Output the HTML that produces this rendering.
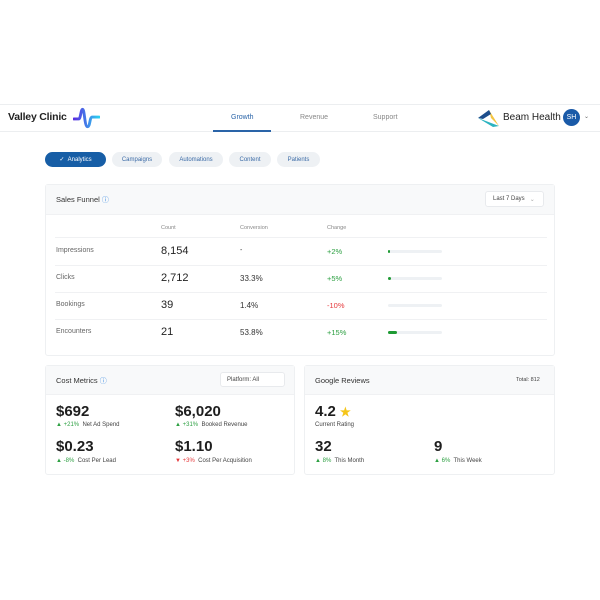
<!DOCTYPE html>
<html><head><style>
*{box-sizing:border-box;margin:0;padding:0}
body{width:600px;height:600px;background:#fff;font-family:"Liberation Sans",sans-serif;color:#222;position:relative;overflow:hidden}
.abs{position:absolute}
.hdr{top:104px;left:0;width:600px;height:28px;border-top:1px solid #eceef0;border-bottom:1px solid #eceef0}
.pill{position:absolute;top:152px;height:15px;border-radius:8px;background:#eef1f4;color:#3a6aa6;font-size:6px;display:flex;align-items:center;justify-content:center}
.card{position:absolute;border:1px solid #eef0f2;border-radius:3px;background:#fff}
.ch{background:#f8f9fa;border-bottom:1px solid #f0f1f3}
.t{position:absolute;white-space:nowrap}
.g{color:#2ea043}.r{color:#e5383b}
.lbl{font-size:7px;color:#666}
.big{font-size:11px;color:#222}
.bar{position:absolute;left:388px;width:54px;height:3px;background:#eef1f4;border-radius:2px}
.bar i{position:absolute;left:0;top:0;height:3px;background:#1e9a33;border-radius:2px}
.hl{position:absolute;left:55px;width:492px;height:1px;background:#f0f1f3}
.m{font-size:15px;font-weight:bold;color:#1e1e1e}
.s{font-size:6px;color:#444}
.box{position:absolute;border:1px solid #e8eaed;border-radius:3px;background:#fff;font-size:6px;color:#444;display:flex;align-items:center}
</style></head><body>
<div class="abs hdr"></div>
<div class="t" style="left:8px;top:111px;font-size:10.5px;font-weight:bold;color:#222;letter-spacing:-0.2px">Valley Clinic</div>
<svg class="abs" style="left:73px;top:107px" width="27" height="22" viewBox="0 0 28 22"><defs><linearGradient id="a" x1="0" x2="1"><stop offset="0" stop-color="#5a2de0"/><stop offset="1" stop-color="#2bd0f0"/></linearGradient></defs><path d="M1 12 H6 C8 12 8 2 10 2 C12 2 12 20 15 20 C18 20 17 10 20 10 H27" fill="none" stroke="url(#a)" stroke-width="3" stroke-linecap="round"/></svg>
<div class="t" style="left:231px;top:114px;font-size:7px;color:#2a64a8">Growth</div>
<div class="abs" style="left:213px;top:130px;width:58px;height:2px;background:#2a64a8"></div>
<div class="t" style="left:300px;top:114px;font-size:7px;color:#888">Revenue</div>
<div class="t" style="left:373px;top:114px;font-size:7px;color:#888">Support</div>
<svg class="abs" style="left:477px;top:108px" width="24" height="20" viewBox="0 0 24 20"><path d="M12 2 L22 18 L14 10 Z" fill="#f4c542"/><path d="M1 10 L12 2 L14 6 L6 11 Z" fill="#1d4e8c"/><path d="M1 10 L22 18 L16 19 Z" fill="#2bb3c0"/></svg>
<div class="t" style="left:503px;top:112px;font-size:10px;color:#222">Beam Health</div>
<div class="abs" style="left:563px;top:109px;width:17px;height:17px;border-radius:50%;background:#1a5aa8;color:#fff;font-size:7px;line-height:17px;text-align:center">SH</div>
<div class="t" style="left:584px;top:113px;font-size:6px;color:#666">⌄</div>

<div class="pill" style="left:45px;width:61px;background:#175ea6;color:#fff">✓&nbsp;&nbsp;Analytics</div>
<div class="pill" style="left:112px;width:50px">Campaigns</div>
<div class="pill" style="left:169px;width:54px">Automations</div>
<div class="pill" style="left:229px;width:42px">Content</div>
<div class="pill" style="left:277px;width:43px">Patients</div>

<div class="card" style="left:45px;top:184px;width:510px;height:172px">
<div class="ch" style="height:30px"></div></div>
<div class="t" style="left:56px;top:195px;font-size:7.5px;color:#333">Sales Funnel <span style="color:#3a8ae0;font-size:7px">ⓘ</span></div>
<div class="box" style="left:485px;top:191px;width:59px;height:16px;padding-left:7px">Last 7 Days&nbsp;&nbsp;&nbsp;<span style="color:#aaa">⌄</span></div>
<div class="t" style="left:161px;top:225px;font-size:5.5px;color:#888">Count</div>
<div class="t" style="left:240px;top:225px;font-size:5.5px;color:#888">Conversion</div>
<div class="t" style="left:327px;top:225px;font-size:5.5px;color:#888">Change</div>
<div class="hl" style="top:237px"></div>
<div class="hl" style="top:265px"></div>
<div class="hl" style="top:292px"></div>
<div class="hl" style="top:319px"></div>

<div class="t lbl" style="left:56px;top:247px">Impressions</div><div class="t big" style="left:161px;top:245px">8,154</div><div class="t lbl" style="left:240px;top:247px;color:#333">-</div><div class="t g" style="left:327px;top:247px;font-size:7.5px">+2%</div><div class="bar" style="top:250px"><i style="width:2px"></i></div>
<div class="t lbl" style="left:56px;top:274px">Clicks</div><div class="t big" style="left:161px;top:272px">2,712</div><div class="t" style="left:240px;top:274px;font-size:8px;color:#333">33.3%</div><div class="t g" style="left:327px;top:274px;font-size:7.5px">+5%</div><div class="bar" style="top:277px"><i style="width:3px"></i></div>
<div class="t lbl" style="left:56px;top:301px">Bookings</div><div class="t big" style="left:161px;top:299px">39</div><div class="t" style="left:240px;top:301px;font-size:8px;color:#333">1.4%</div><div class="t r" style="left:327px;top:301px;font-size:7.5px">-10%</div><div class="bar" style="top:304px"></div>
<div class="t lbl" style="left:56px;top:328px">Encounters</div><div class="t big" style="left:161px;top:326px">21</div><div class="t" style="left:240px;top:328px;font-size:8px;color:#333">53.8%</div><div class="t g" style="left:327px;top:328px;font-size:7.5px">+15%</div><div class="bar" style="top:331px"><i style="width:9px"></i></div>

<div class="card" style="left:45px;top:365px;width:250px;height:110px"><div class="ch" style="height:29px"></div></div>
<div class="t" style="left:56px;top:376px;font-size:7.5px;color:#333">Cost Metrics <span style="color:#3a8ae0;font-size:7px">ⓘ</span></div>
<div class="box" style="left:220px;top:372px;width:65px;height:15px;padding-left:6px">Platform: All</div>
<div class="t m" style="left:56px;top:403px">$692</div>
<div class="t s" style="left:56px;top:422px"><span class="g">▲ +21%</span>&nbsp; Net Ad Spend</div>
<div class="t m" style="left:175px;top:403px">$6,020</div>
<div class="t s" style="left:175px;top:422px"><span class="g">▲ +31%</span>&nbsp; Booked Revenue</div>
<div class="t m" style="left:56px;top:438px">$0.23</div>
<div class="t s" style="left:56px;top:458px"><span class="g">▲ -8%</span>&nbsp; Cost Per Lead</div>
<div class="t m" style="left:175px;top:438px">$1.10</div>
<div class="t s" style="left:175px;top:458px"><span class="r">▼ +3%</span>&nbsp; Cost Per Acquisition</div>

<div class="card" style="left:304px;top:365px;width:251px;height:110px"><div class="ch" style="height:29px"></div></div>
<div class="t" style="left:315px;top:376px;font-size:7.5px;color:#333">Google Reviews</div>
<div class="t" style="left:516px;top:377px;font-size:5.5px;color:#444">Total: 812</div>
<div class="t m" style="left:315px;top:403px">4.2 <span style="color:#f5c518;font-size:12px">★</span></div>
<div class="t s" style="left:315px;top:422px">Current Rating</div>
<div class="t m" style="left:315px;top:438px">32</div>
<div class="t s" style="left:315px;top:458px"><span class="g">▲ 8%</span>&nbsp; This Month</div>
<div class="t m" style="left:434px;top:438px">9</div>
<div class="t s" style="left:434px;top:458px"><span class="g">▲ 6%</span>&nbsp; This Week</div>
</body></html>
